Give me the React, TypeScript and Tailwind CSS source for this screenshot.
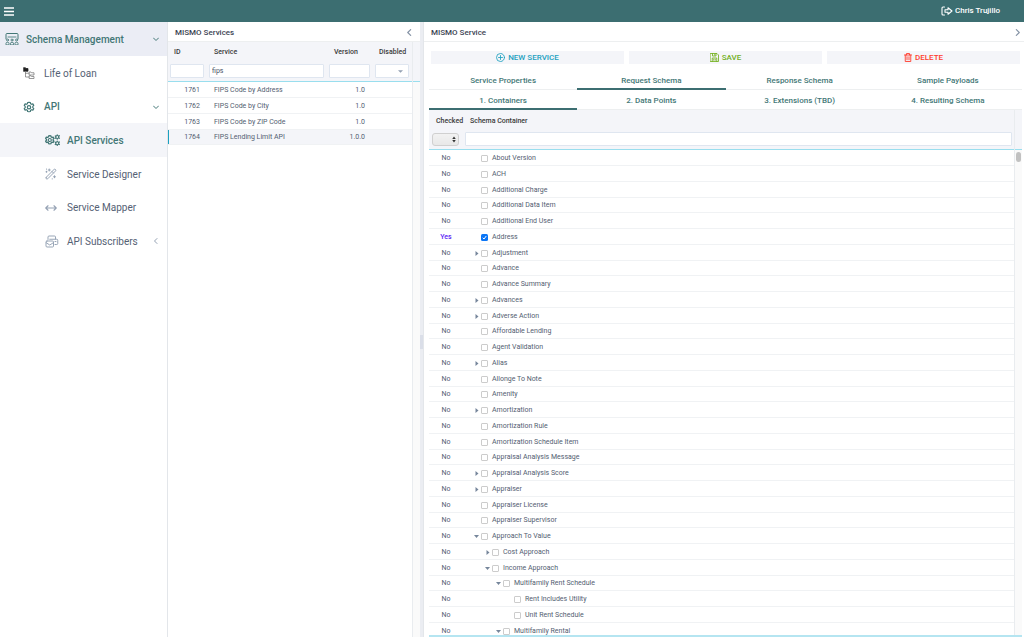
import React from 'react';

type NavItem = {
  label: string;
  icon: React.ReactNode;
  level: 0 | 1 | 2;
  strong?: boolean;
  tint?: string;
  trailing?: 'down' | 'left';
};

const stroke = {
  fill: 'none',
  stroke: 'currentColor',
  strokeLinecap: 'round' as const,
  strokeLinejoin: 'round' as const,
};

const GEAR =
  'M12 2.5l2.6.5.7 2.6 1.8 1 2.6-.8 1.8 3-1.9 2v2.4l1.9 2-1.8 3-2.6-.8-1.8 1-.7 2.6-2.6.5-2.6-.5-.7-2.6-1.8-1-2.6.8-1.8-3 1.9-2v-2.4l-1.9-2 1.8-3 2.6.8 1.8-1 .7-2.6z';

function BoardIcon() {
  return (
    <svg viewBox="0 0 28 24" className="h-3 w-3.5" {...stroke} strokeWidth="1.7">
      <path d="M2 12V3q0-2 2-2h20q2 0 2 2v9" strokeWidth="2" />
      <path d="M6 8h16" />
      <circle cx="5" cy="14" r="2" />
      <circle cx="14" cy="14" r="2" />
      <circle cx="23" cy="14" r="2" />
      <path d="M2 23v-2.500q0-2 3-2t3 2V23zM11 23v-2.500q0-2 3-2t3 2V23zM20 23v-2.500q0-2 3-2t3 2V23z" />
    </svg>
  );
}

function TreeIcon() {
  return (
    <svg viewBox="0 0 24 24" className="h-3 w-3" {...stroke} strokeWidth="1.5">
      <path d="M1.500 1.500h3.500l1 1.500h4v5.500H1.500z" fill="#222222" stroke="#222222" />
      <path d="M5 9v11h7M5 12.500h7" />
      <path d="M13 10h3l1 1.500h5V16h-9zM13 17.500h3l1 1.500h5v4h-9z" />
    </svg>
  );
}

function GearIcon() {
  return (
    <svg viewBox="0 0 24 24" className="h-3 w-3" {...stroke} strokeWidth="2.4">
      <path d={GEAR} />
      <circle cx="12" cy="12.500" r="3.400" />
    </svg>
  );
}

function GearsIcon() {
  return (
    <svg viewBox="0 0 30 24" className="h-3 w-[15px]" {...stroke} strokeWidth="2.4">
      <g transform="translate(-1 1) scale(.88)">
        <path d={GEAR} strokeWidth="2.900" />
        <circle cx="12" cy="12.500" r="3.500" strokeWidth="2.600" />
      </g>
      <circle cx="24.500" cy="6" r="3" />
      <circle cx="24.500" cy="18.500" r="3" />
      <path d="M24.500 1.500v1M24.500 9.500v1M20.500 4l.8.5M28 8l.8.5M20.500 8.500l.8-.5M28 4l.8-.5M24.500 14v1M24.500 22v1M20.500 16.500l.8.5M28 20.500l.8.5M20.500 21l.8-.5M28 16.500l.8-.5" />
    </svg>
  );
}

function WandIcon() {
  return (
    <svg viewBox="0 0 24 24" className="h-3 w-3" {...stroke} strokeWidth="1.9">
      <path d="M2.500 18.500L18 3q1.500-1.500 3 0t0 3L5.500 21.500q-1.500 1.500-3 0t0-3zM14 7l3 3" />
      <path d="M8.500 2v4M6.500 4h4M19 15.500v4M17 17.500h4M3 6.500v2M2 7.500h2M14.500 21.500v.5M3 2v.5" />
    </svg>
  );
}

function ArrowsIcon() {
  return (
    <svg viewBox="0 0 24 24" className="h-3 w-3" {...stroke} strokeWidth="2.2">
      <path d="M1.500 12h21M6 7.500L1.500 12 6 16.500M18 7.500l4.500 4.500-4.500 4.500" />
    </svg>
  );
}

function MailIcon() {
  return (
    <svg viewBox="0 0 28 26" className="h-[13px] w-3.5" {...stroke} strokeWidth="1.9">
      <path d="M6 9V4q0-2 2-2h11q2 0 2 2v4" />
      <path d="M4 12h11q2 0 2 2v8q0 2-2 2H4q-2 0-2-2v-8q0-2 2-2z" />
      <path d="M2.500 15.500l7 4.500 7-4.500" />
      <path d="M9.500 8.500h14q2 0 2 2V17q0 2-2 2H20M20 13h2" />
    </svg>
  );
}

function Chevron({ dir, className }: { dir: 'left' | 'right' | 'down'; className: string }) {
  const d = { left: 'M8 1L3 6l5 5', right: 'M4 1l5 5-5 5', down: 'M1 4l5 5 5-5' }[dir];
  return (
    <svg viewBox="0 0 12 12" className={className} {...stroke} strokeWidth="2">
      <path d={d} />
    </svg>
  );
}

const nav: NavItem[] = [
  { label: 'Schema Management', icon: <BoardIcon />, level: 0, strong: true, tint: 'bg-[#ebedf5]', trailing: 'down' },
  { label: 'Life of Loan', icon: <TreeIcon />, level: 1 },
  { label: 'API', icon: <GearIcon />, level: 1, strong: true, trailing: 'down' },
  { label: 'API Services', icon: <GearsIcon />, level: 2, strong: true, tint: 'bg-[#f4f5f9]' },
  { label: 'Service Designer', icon: <WandIcon />, level: 2 },
  { label: 'Service Mapper', icon: <ArrowsIcon />, level: 2 },
  { label: 'API Subscribers', icon: <MailIcon />, level: 2, trailing: 'left' },
];

const indent = ['pl-[5px]', 'pl-[23px]', 'pl-[45px]'];

function Sidebar() {
  return (
    <nav className="w-[168px] shrink-0 border-r border-[#e3e6ea]">
      <ul>
        {nav.map((n) => (
          <li key={n.label} className="h-[34px] nth-[3n]:h-[33px]">
            <a
              href="#"
              className={`flex h-full items-center pr-2 text-[10px] ${indent[n.level]} ${n.tint ?? ''} ${
                n.strong ? 'font-medium text-[#437776]' : 'text-[#556174]'
              }`}
            >
              <span className={`flex shrink-0 ${n.level === 2 ? 'w-[22px]' : 'w-[21px]'} ${n.strong ? '' : n.level === 1 ? 'text-[#777777]' : 'text-[#94a1b3]'}`}>
                {n.icon}
              </span>
              <span className="flex-1 whitespace-nowrap">{n.label}</span>
              {n.trailing && (
                <Chevron
                  dir={n.trailing}
                  className={n.trailing === 'down' ? 'h-1.5 w-1.5' : 'h-1.5 w-1.5 text-[#94a1b3]'}
                />
              )}
            </a>
          </li>
        ))}
      </ul>
    </nav>
  );
}

const services = [
  ['1761', 'FIPS Code by Address', '1.0'],
  ['1762', 'FIPS Code by City', '1.0'],
  ['1763', 'FIPS Code by ZIP Code', '1.0'],
  ['1764', 'FIPS Lending Limit API', '1.0.0'],
];

const field = 'block h-3.5 w-full rounded-[1px] border border-[#dfe6f0] bg-white px-0.5 text-[7px] text-[#475466] outline-none';

function ServiceList() {
  return (
    <section className="flex w-[252px] shrink-0 flex-col">
      <header className="flex h-5 items-center justify-between border-b border-[#edeff0] pt-0.5 pr-[7px] pl-[7px]">
        <h2 className="text-[8px] font-medium text-[#3b4353]">MISMO Services</h2>
        <button aria-label="Collapse services" className="text-[#8593a6]">
          <Chevron dir="left" className="h-[7px] w-[7px]" />
        </button>
      </header>
      <div className="flex flex-1">
        <table className="w-full table-fixed self-start border-collapse text-[7px] text-[#536071]">
          <colgroup>
            <col className="w-[39px]" />
            <col />
            <col className="w-[46px]" />
            <col className="w-[39px]" />
          </colgroup>
          <thead className="bg-[#f4f5f9] text-left text-[#3a3a3a]">
            <tr className="h-5">
              <th scope="col" className="pl-1.5 font-medium">ID</th>
              <th scope="col" className="pl-[7px] font-medium">Service</th>
              <th scope="col" className="pl-[7px] font-medium">Version</th>
              <th scope="col" className="pl-1.5 font-medium">Disabled</th>
            </tr>
            <tr className="h-[19px] [&>td]:border-b [&>td]:border-[#99deee]">
              <td className="pr-[3px] pl-0.5"><input aria-label="Filter ID" className={field} /></td>
              <td className="pr-[3px] pl-0.5"><input aria-label="Filter service" defaultValue="fips" className={field} /></td>
              <td className="pr-[3px] pl-0.5"><input aria-label="Filter version" className={field} /></td>
              <td className="pr-[3px] pl-0.5">
                <div className="relative">
                  <select aria-label="Filter disabled" className={`${field} appearance-none`}>
                    <option></option>
                  </select>
                  <svg viewBox="0 0 6 3" className="pointer-events-none absolute top-1.5 right-1.5 h-[3px] w-[5px]">
                    <path d="M0 0h6L3 3z" fill="#94a1b3" />
                  </svg>
                </div>
              </td>
            </tr>
          </thead>
          <tbody>
            {services.map(([id, name, version], i) => (
              <tr
                key={id}
                className={`h-4 border-b border-[#f0f2f4] leading-none nth-[4n]:h-[15px] ${i === 3 ? 'bg-[#f4f5f9]' : ''}`}
              >
                <td className={`pt-0.5 pr-[7px] text-right ${i === 3 ? 'shadow-[inset_1px_0_0_#1ca1c1]' : ''}`}>{id}</td>
                <td className="pt-0.5 pl-[7px]">{name}</td>
                <td className="pt-0.5 pr-2 text-right">{version}</td>
                <td></td>
              </tr>
            ))}
          </tbody>
        </table>
        <div className="flex w-2 shrink-0 flex-col border-l border-[#e9ecef] bg-[#fafafa]">
          <div className="h-10 border-b border-[#99deee] bg-[#f4f5f9]" />
        </div>
      </div>
    </section>
  );
}

type Row = { name: string; depth?: 0 | 1 | 2 | 3; state?: 'open' | 'closed'; checked?: boolean };

const rows: Row[] = [
  { name: 'About Version' },
  { name: 'ACH' },
  { name: 'Additional Charge' },
  { name: 'Additional Data Item' },
  { name: 'Additional End User' },
  { name: 'Address', checked: true },
  { name: 'Adjustment', state: 'closed' },
  { name: 'Advance' },
  { name: 'Advance Summary' },
  { name: 'Advances', state: 'closed' },
  { name: 'Adverse Action', state: 'closed' },
  { name: 'Affordable Lending' },
  { name: 'Agent Validation' },
  { name: 'Alias', state: 'closed' },
  { name: 'Allonge To Note' },
  { name: 'Amenity' },
  { name: 'Amortization', state: 'closed' },
  { name: 'Amortization Rule' },
  { name: 'Amortization Schedule Item' },
  { name: 'Appraisal Analysis Message' },
  { name: 'Appraisal Analysis Score', state: 'closed' },
  { name: 'Appraiser', state: 'closed' },
  { name: 'Appraiser License' },
  { name: 'Appraiser Supervisor' },
  { name: 'Approach To Value', state: 'open' },
  { name: 'Cost Approach', depth: 1, state: 'closed' },
  { name: 'Income Approach', depth: 1, state: 'open' },
  { name: 'Multifamily Rent Schedule', depth: 2, state: 'open' },
  { name: 'Rent Includes Utility', depth: 3 },
  { name: 'Unit Rent Schedule', depth: 3 },
  { name: 'Multifamily Rental', depth: 2, state: 'open' },
];

const treeIndent = ['pl-[11px]', 'pl-[22px]', 'pl-[33px]', 'pl-[44px]'];

function ContainerTree() {
  return (
    <div className="flex min-h-0 flex-1 overflow-hidden border-b-2 border-[#b5e5f1]">
      <div className="min-w-0 flex-1">
        <table className="w-full table-fixed border-collapse text-[7px] text-[#536071]">
          <colgroup>
            <col className="w-[34px]" />
            <col />
          </colgroup>
          <thead className="bg-[#f4f5f9] text-left text-[#3a3a3a]">
            <tr className="h-5">
              <th scope="col" className="pt-0.5 pl-[7px] font-medium whitespace-nowrap">Checked</th>
              <th scope="col" className="pt-0.5 pl-[7px] font-medium">Schema Container</th>
            </tr>
            <tr className="h-[19px] [&>td]:border-b [&>td]:border-[#99deee]">
              <td className="pr-1 pl-[3px]">
                <div className="relative">
                  <select
                    aria-label="Filter checked"
                    className="block h-[13px] w-full appearance-none rounded-[3px] border border-[#d0d0d0] bg-linear-to-b from-[#f2f2f2] to-[#e8e8e8] outline-none"
                  >
                    <option></option>
                  </select>
                  <svg viewBox="0 0 6 12" className="pointer-events-none absolute top-[3px] right-[3px] h-[7px] w-1">
                    <path d="M0 5l3-4 3 4zM0 7l3 4 3-4z" fill="#333333" />
                  </svg>
                </div>
              </td>
              <td className="pr-0.5 pl-0.5"><input aria-label="Filter schema container" className={field} /></td>
            </tr>
          </thead>
          <tbody>
            {rows.map((r) => (
              <tr key={r.name} className="h-4 border-b border-[#f0f2f4] leading-none nth-[4n]:h-[15px]">
                <td className={`pt-0.5 text-center ${r.checked ? 'font-medium text-[#5b21f5]' : ''}`}>{r.checked ? 'Yes' : 'No'}</td>
                <td className="pt-0.5">
                  <div className={`flex items-center ${treeIndent[r.depth ?? 0]}`}>
                    <span className="flex w-[7px]">
                      {r.state && (
                        <button aria-label={`Toggle ${r.name}`} className="flex">
                          <svg viewBox="0 0 10 10" className="h-[5px] w-[5px]">
                            <path d={r.state === 'open' ? 'M0 2h10L5 8z' : 'M3 0l6 5-6 5z'} fill="#76869b" />
                          </svg>
                        </button>
                      )}
                    </span>
                    <label className="flex items-center gap-1">
                      <input
                        type="checkbox"
                        defaultChecked={r.checked}
                        className="peer h-[7px] w-[7px] appearance-none rounded-[1px] border border-[#cccccc] bg-white checked:hidden"
                      />
                      <svg viewBox="0 0 14 14" className="hidden h-[7px] w-[7px] peer-checked:block">
                        <rect width="14" height="14" rx="3" fill="#0b76f6" />
                        <path d="M3.500 7.500L6 10l4.500-6" fill="none" stroke="#ffffff" strokeWidth="2" />
                      </svg>
                      <span>{r.name}</span>
                    </label>
                  </div>
                </td>
              </tr>
            ))}
          </tbody>
        </table>
      </div>
      <div className="flex w-2 shrink-0 flex-col border-l border-[#e9ecef] bg-[#fafafa]">
        <div className="h-10 border-b border-[#99deee] bg-[#f4f5f9]" />
        <div className="mx-px mt-0.5 h-2.5 rounded-full bg-[#c1c1c1]" />
      </div>
    </div>
  );
}

function Tabs({ items, active, label }: { items: string[]; active: number; label: string }) {
  return (
    <div role="tablist" aria-label={label} className="grid shrink-0 grid-cols-4">
      {items.map((t, i) => (
        <button
          key={t}
          role="tab"
          aria-selected={i === active}
          className={`h-5 text-[8px] font-medium text-[#437776] ${
            i === active ? 'border-b-2 border-[#3c6e71] pt-1' : 'border-b border-[#edeff0] pt-[3px]'
          }`}
        >
          {t}
        </button>
      ))}
    </div>
  );
}

const action = 'flex h-[13px] items-center justify-center gap-[3px] bg-[#f4f5f9] text-[8px] font-medium';

function ServiceDetail() {
  return (
    <section className="flex min-w-0 flex-1 flex-col">
      <header className="flex h-5 shrink-0 items-center justify-between border-b border-[#edeff0] pt-0.5 pr-[3px] pl-[7px]">
        <h2 className="text-[8px] font-medium text-[#3b4353]">MISMO Service</h2>
        <button aria-label="Expand service" className="text-[#8593a6]">
          <Chevron dir="right" className="h-[7px] w-[7px]" />
        </button>
      </header>
      <div className="flex min-h-0 flex-1 flex-col pr-0.5 pl-[5px]">
        <div className="grid grid-cols-3 gap-[5px] pt-[9px] pr-0.5 pb-1.5 pl-0.5">
          <button className={`${action} text-[#1ca1c1]`}>
            <svg viewBox="0 0 18 18" className="h-[9px] w-[9px]" {...stroke} strokeWidth="1.7">
              <circle cx="9" cy="9" r="8" />
              <path d="M9 5v8M5 9h8" />
            </svg>
            NEW SERVICE
          </button>
          <button className={`${action} text-[#72b01d]`}>
            <svg viewBox="0 0 18 18" className="h-[9px] w-[9px]" {...stroke} strokeWidth="1.7">
              <path d="M1 1h13l3 3v13H1z" />
              <path d="M5 1v5h7V1M9.500 2.500v2M4.500 17v-7h9v7M7.500 12.500v2M10.500 12.500v2" />
            </svg>
            SAVE
          </button>
          <button className={`${action} text-[#ff3c2e]`}>
            <svg viewBox="0 0 16 18" className="h-[9px] w-2" {...stroke} strokeWidth="1.8">
              <path d="M1 4h14M5 4V1h6v3M2.500 4v13h11V4M6 7.500v6M10 7.500v6" />
            </svg>
            DELETE
          </button>
        </div>
        <Tabs label="Service sections" active={1} items={['Service Properties', 'Request Schema', 'Response Schema', 'Sample Payloads']} />
        <Tabs label="Schema steps" active={0} items={['1. Containers', '2. Data Points', '3. Extensions (TBD)', '4. Resulting Schema']} />
        <ContainerTree />
      </div>
    </section>
  );
}

export default function App() {
  return (
    <div className="flex h-screen flex-col overflow-hidden bg-white font-['Roboto',sans-serif]">
      <header className="flex h-[22px] shrink-0 items-center justify-between bg-[#3c6e71] pr-6 pl-1 text-white">
        <button aria-label="Toggle menu">
          <svg viewBox="0 0 10 9" className="h-[9px] w-2.5">
            <path d="M0 1h10M0 4.500h10M0 8h10" stroke="currentColor" strokeWidth="1.300" />
          </svg>
        </button>
        <button className="flex items-center gap-0.5 text-[8px] font-medium">
          <svg viewBox="0 0 24 20" className="h-2.5 w-3" {...stroke} strokeWidth="2.2">
            <path d="M7 2H4Q2 2 2 4v12q0 2 2 2h3" />
            <path d="M8 7.500h6V3.500l8 6.500-8 6.500v-4H8z" />
          </svg>
          Chris Trujillo
        </button>
      </header>
      <main className="flex min-h-0 flex-1">
        <Sidebar />
        <ServiceList />
        <div className="flex w-1 shrink-0 items-center border-r border-[#e3e6ea] bg-[#ebedf2]">
          <div className="mt-6 h-3.5 w-full bg-[#dadee8]" />
        </div>
        <ServiceDetail />
      </main>
    </div>
  );
}
